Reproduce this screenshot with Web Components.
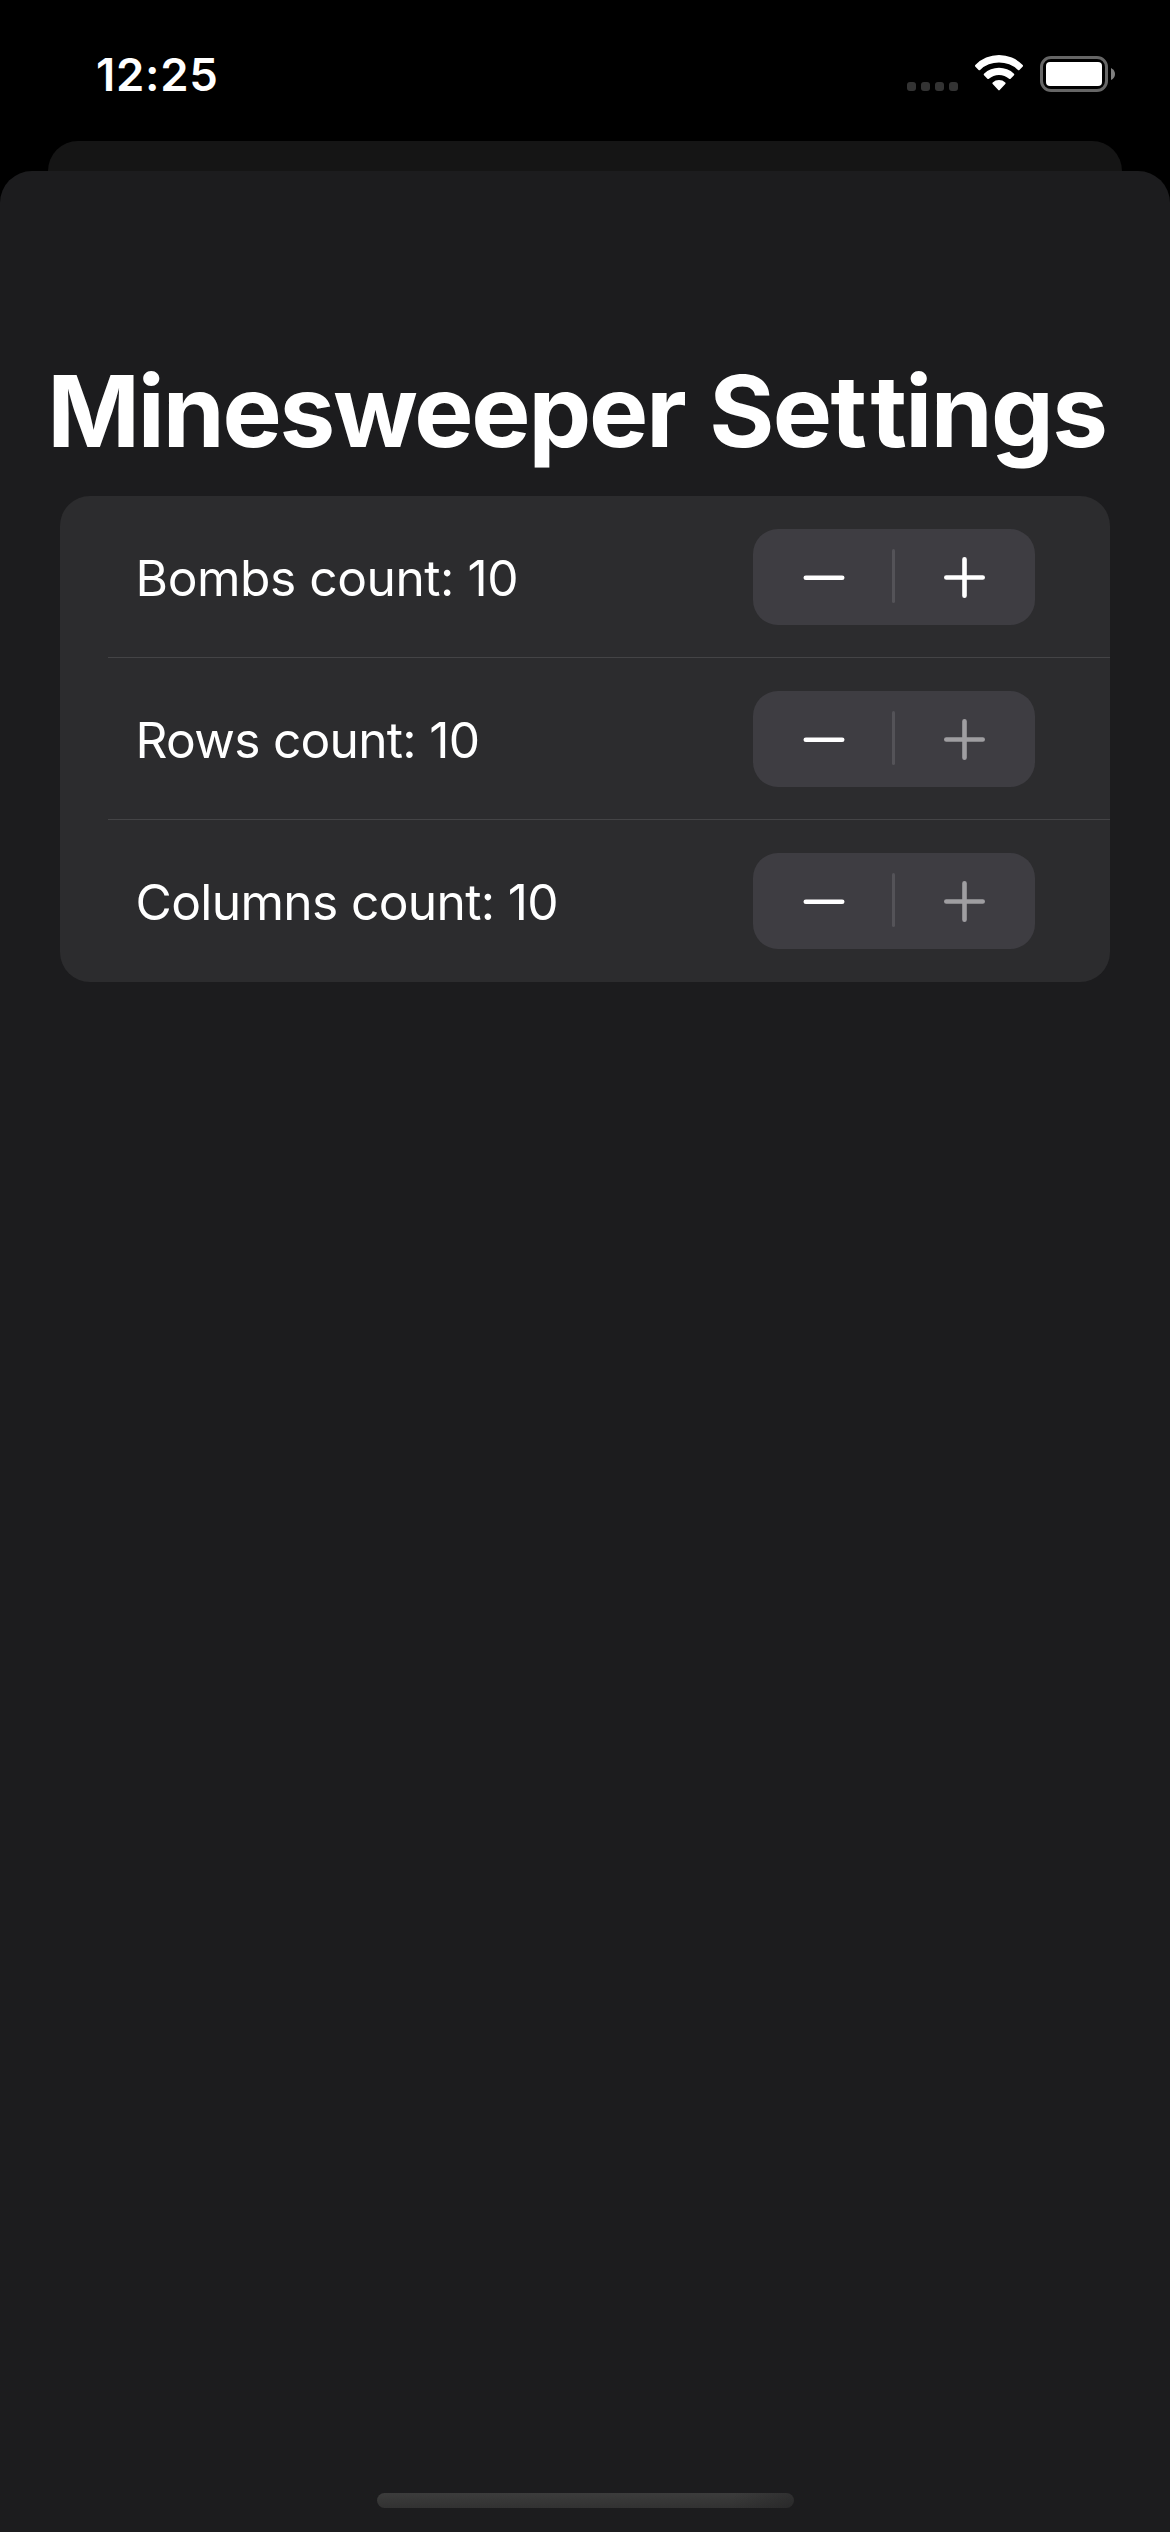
<!DOCTYPE html>
<html lang="en">
<head>
<meta charset="utf-8">
<title>Minesweeper Settings</title>
<style>
html,body{margin:0;height:100%;background:#000;color:#fff;font-family:Inter,"Liberation Sans",sans-serif}
body{overflow:hidden}
</style>
</head>
<body>
<settings-screen></settings-screen>
<script>
const define = (name, html, setup) => customElements.define(name, class extends HTMLElement {
  constructor() {
    super();
    const t = document.createElement('template');
    t.innerHTML = html;
    this.attachShadow({ mode: 'open' }).append(t.content.cloneNode(true));
  }
  connectedCallback() { if (setup) setup(this); }
});

define('status-bar', `
<style>
:host{display:flex;box-sizing:border-box;height:141px;padding:44px 55px 0 96px;justify-content:space-between;align-items:flex-start}
time{font-size:45.5px;line-height:61px;font-weight:600;letter-spacing:0.7px}
svg{display:block;margin-top:8px}
</style>
<time><slot></slot></time>
<svg width="208" height="44" viewBox="0 0 208 44" fill="#fff">
  <g fill="#333"><rect y="30" width="9" height="9" rx="3"/><rect x="14" y="30" width="9" height="9" rx="3"/><rect x="28" y="30" width="9" height="9" rx="3"/><rect x="42" y="30" width="9" height="9" rx="3"/></g>
  <path d="M68.300 13A33 33 0 0 1 115.700 13Q116.400 13.700 115.800 14.400L112.400 17.900Q111.700 18.600 110.900 17.900A27.600 27.600 0 0 0 73.100 17.900Q72.300 18.600 71.600 17.900L68.200 14.400Q67.600 13.700 68.300 13Z"/>
  <path d="M77 21.700A22.100 22.100 0 0 1 107 21.700Q107.700 22.400 107 23.200L103.600 26.700Q102.900 27.400 102.100 26.700A15.300 15.300 0 0 0 81.900 26.700Q81.100 27.400 80.400 26.700L77 23.200Q76.300 22.400 77 21.700Z"/>
  <path d="M85.700 30.400A9.700 9.700 0 0 1 98.300 30.400Q99.100 31.200 98.300 32L92.700 38.100Q92 38.800 91.300 38.100L85.700 32Q84.900 31.200 85.700 30.400Z"/>
  <rect x="134.500" y="5.500" width="65" height="33" rx="9.500" fill="none" stroke="#666" stroke-width="3"/>
  <rect x="139" y="10" width="56" height="24" rx="4"/>
  <path d="M204 16Q208 18 208 22T204 28Z" fill="#808080"/>
</svg>`);

define('value-stepper', `
<style>
:host{display:flex;width:282px;height:96px;border-radius:25px;background:#3e3d42;align-items:center;color:#fff}
button{all:unset;width:139px;height:96px;display:flex;align-items:center;justify-content:center}
.inc{width:140px}
button:disabled{color:#9f9ea1}
i{width:3px;height:54px;border-radius:1.5px;background:#545358;margin-top:-2px}
svg{display:block;overflow:visible;stroke:currentColor;stroke-width:4.600;stroke-linecap:round;fill:none}
</style>
<button aria-label="Decrement"><svg width="42" height="42"><path d="M3.800 21.750H40.200"/></svg></button><i></i>
<button class="inc" aria-label="Increment"><svg width="42" height="42"><path d="M2.300 21.500H38.700M20.500 3.300V39.700"/></svg></button>`,
el => { el.shadowRoot.querySelector('.inc').disabled = el.hasAttribute('at-max'); });

define('settings-row', `
<style>
:host{display:flex;box-sizing:border-box;height:162px;padding:0 75px;align-items:center;justify-content:space-between;
background:linear-gradient(#444446,#444446) 48px 161px/calc(100% - 48px) 1px no-repeat}
:host(:last-of-type){background:none}
span{font-size:49.700px;line-height:60px;padding:2px 0 0 .6px;white-space:nowrap;letter-spacing:var(--track,-0.6px)}
</style>
<span><slot></slot></span><slot name="control"></slot>`);

define('settings-list', `
<style>:host{display:block;margin:0 60px;border-radius:30px;background:#2c2c2e;overflow:hidden}</style><slot></slot>`);

define('modal-sheet', `
<style>
:host{display:flex;flex-direction:column;flex:1}
.back{height:30px;margin:0 48px;background:#151515;border-radius:30px 30px 0 0}
.sheet{flex:1;display:flex;flex-direction:column;background:#1c1c1e;border-radius:32px 32px 0 0}
h1{margin:180px 0 0;padding-left:47.300px;height:145px;font-size:99.500px;line-height:120px;font-weight:700;white-space:nowrap}
.home{width:417px;height:15px;margin:auto auto 24px;border-radius:7.500px;background:linear-gradient(100deg,transparent 85%,#1c1c1e66),linear-gradient(#3c3c3c,#323232)}
</style>
<div class="back"></div>
<div class="sheet"><h1><slot name="title"></slot></h1><slot></slot><div class="home"></div></div>`);

define('settings-screen', `
<style>
:host{display:flex;flex-direction:column;width:1170px;height:2532px;background:#000}
.title{word-spacing:1.200px}
.lead{letter-spacing:-2.150px}
.tail{letter-spacing:-1.600px}
.open{letter-spacing:3.500px}
</style>
<status-bar>12:25</status-bar>
<modal-sheet>
  <span slot="title" class="title"><span class="lead">Minesweeper</span> <span class="tail">Se<span class="open">t</span>tings</span></span>
  <settings-list>
    <settings-row style="--track:-.47px">Bombs count: 10<value-stepper slot="control"></value-stepper></settings-row>
    <settings-row style="--track:-.74px">Rows count: 10<value-stepper slot="control" at-max></value-stepper></settings-row>
    <settings-row style="--track:-.66px">Columns count: 10<value-stepper slot="control" at-max></value-stepper></settings-row>
  </settings-list>
</modal-sheet>`);
</script>
</body>
</html>
